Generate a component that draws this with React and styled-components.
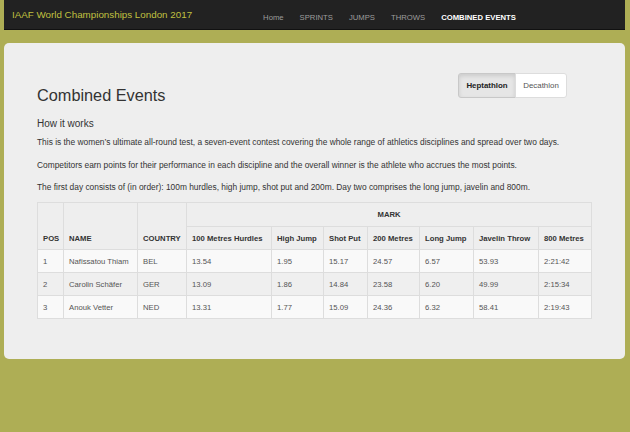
import React, { useState } from "react";
import styled, { createGlobalStyle, css } from "styled-components";

const GlobalStyle = createGlobalStyle`
    html, body {
        margin: 0;
        padding: 0;
        background: #aeae55;
        font-family: "Liberation Sans", Arial, sans-serif;
        color: #333;
    }
    * {
        box-sizing: border-box;
    }
`;

const Page = styled.div`
    padding: 0 5px 0 4px;
    min-height: 432px;
`;

const Navbar = styled.nav`
    display: flex;
    align-items: center;
    height: 30px;
    padding: 0 8px;
    background: #222;
    border-bottom: 1px solid #111;
`;

const Brand = styled.a`
    font-size: 9.8px;
    color: #c0c040;
    text-decoration: none;
    white-space: nowrap;
`;

const NavList = styled.ul`
    display: flex;
    gap: 16px;
    margin: 0 0 0 71px;
    padding: 0;
    list-style: none;
`;

const NavLink = styled.a`
    font-size: 7.7px;
    color: #9d9d9d;
    text-decoration: none;
    white-space: nowrap;
    ${({ $active }) =>
        $active &&
        css`
            color: #fff;
            font-weight: bold;
        `}
`;

const Panel = styled.main`
    margin-top: 13px;
    height: 316px;
    padding: 30px 34px 0 33px;
    background: #eee;
    border-radius: 5px;
`;

const TopRow = styled.div`
    display: flex;
    justify-content: space-between;
    align-items: flex-start;
`;

const Title = styled.h2`
    margin: 13px 0 0;
    font-size: 16.3px;
    line-height: 18px;
    font-weight: normal;
    color: #333;
`;

const ButtonGroup = styled.div`
    display: flex;
    margin-right: 24px;
`;

const ToggleButton = styled.button`
    width: 52px;
    height: 25px;
    padding: 0;
    font-family: inherit;
    font-size: 7.9px;
    color: #555;
    background: #fff;
    border: 1px solid #ddd;
    cursor: pointer;
    &:first-child {
        border-radius: 3px 0 0 3px;
    }
    &:last-child {
        border-radius: 0 3px 3px 0;
        margin-left: -1px;
    }
    ${({ $active }) =>
        $active &&
        css`
            width: 58px;
            color: #222;
            font-weight: bold;
            background: #e6e6e6;
            border-color: #c8c8c8;
            box-shadow: inset 0 2px 4px rgba(0, 0, 0, 0.12);
        `}
`;

const SubTitle = styled.h4`
    margin: 14px 0 8px;
    font-size: 10px;
    line-height: 11px;
    font-weight: normal;
    color: #333;
`;

const Intro = styled.div`
    display: flex;
    flex-direction: column;
    gap: 11.5px;
    margin-bottom: 9px;
`;

const Text = styled.p`
    margin: 0;
    font-size: 8.4px;
    line-height: 11px;
    color: #333;
`;

const Table = styled.table`
    width: 554px;
    table-layout: fixed;
    border-collapse: collapse;
    font-size: 7.7px;
`;

const HeadCell = styled.th`
    height: ${({ $tall }) => ($tall ? "24px" : "23px")};
    padding: 0 5px;
    text-align: ${({ $center }) => ($center ? "center" : "left")};
    vertical-align: middle;
    font-weight: bold;
    color: #333;
    border: 1px solid #ddd;
    white-space: nowrap;
    ${({ $bottom }) =>
        $bottom &&
        css`
            vertical-align: bottom;
            padding-bottom: 6px;
        `}
`;

const Row = styled.tr`
    background: ${({ $odd }) => ($odd ? "#f9f9f9" : "#efefef")};
`;

const Cell = styled.td`
    height: 23px;
    padding: 0 5px;
    color: #555;
    border: 1px solid #ddd;
    white-space: nowrap;
`;

const columns = [26, 74, 49, 85, 52, 44, 52, 54, 65, 53];

const events = [
    "100 Metres Hurdles",
    "High Jump",
    "Shot Put",
    "200 Metres",
    "Long Jump",
    "Javelin Throw",
    "800 Metres",
];

const athletes = [
    { pos: 1, name: "Nafissatou Thiam", country: "BEL", marks: ["13.54", "1.95", "15.17", "24.57", "6.57", "53.93", "2:21:42"] },
    { pos: 2, name: "Carolin Schäfer", country: "GER", marks: ["13.09", "1.86", "14.84", "23.58", "6.20", "49.99", "2:15:34"] },
    { pos: 3, name: "Anouk Vetter", country: "NED", marks: ["13.31", "1.77", "15.09", "24.36", "6.32", "58.41", "2:19:43"] },
];

const App = () => {
    const [event, setEvent] = useState("Heptathlon");

    return (
        <>
            <GlobalStyle />
            <Page>
                <Navbar>
                    <Brand href="#">IAAF World Championships London 2017</Brand>
                    <NavList>
                        {["Home", "SPRINTS", "JUMPS", "THROWS", "COMBINED EVENTS"].map((l) => (
                            <li key={l}>
                                <NavLink href="#" $active={l === "COMBINED EVENTS"}>
                                    {l}
                                </NavLink>
                            </li>
                        ))}
                    </NavList>
                </Navbar>
                <Panel>
                    <TopRow>
                        <Title>Combined Events</Title>
                        <ButtonGroup>
                            {["Heptathlon", "Decathlon"].map((e) => (
                                <ToggleButton key={e} $active={event === e} onClick={() => setEvent(e)}>
                                    {e}
                                </ToggleButton>
                            ))}
                        </ButtonGroup>
                    </TopRow>
                    <SubTitle>How it works</SubTitle>
                    <Intro>
                        <Text>
                            This is the women’s ultimate all-round test, a seven-event contest covering the whole
                            range of athletics disciplines and spread over two days.
                        </Text>
                        <Text>
                            Competitors earn points for their performance in each discipline and the overall
                            winner is the athlete who accrues the most points.
                        </Text>
                        <Text>
                            The first day consists of (in order): 100m hurdles, high jump, shot put and 200m. Day
                            two comprises the long jump, javelin and 800m.
                        </Text>
                    </Intro>
                    <Table>
                        <colgroup>
                            {columns.map((w, i) => (
                                <col key={i} style={{ width: w }} />
                            ))}
                        </colgroup>
                        <thead>
                            <tr>
                                <HeadCell rowSpan={2} $bottom>POS</HeadCell>
                                <HeadCell rowSpan={2} $bottom>NAME</HeadCell>
                                <HeadCell rowSpan={2} $bottom>COUNTRY</HeadCell>
                                <HeadCell colSpan={7} $center $tall>MARK</HeadCell>
                            </tr>
                            <tr>
                                {events.map((e) => (
                                    <HeadCell key={e}>{e}</HeadCell>
                                ))}
                            </tr>
                        </thead>
                        <tbody>
                            {athletes.map((a, i) => (
                                <Row key={a.pos} $odd={i % 2 === 0}>
                                    <Cell>{a.pos}</Cell>
                                    <Cell>{a.name}</Cell>
                                    <Cell>{a.country}</Cell>
                                    {a.marks.map((m, j) => (
                                        <Cell key={j}>{m}</Cell>
                                    ))}
                                </Row>
                            ))}
                        </tbody>
                    </Table>
                </Panel>
            </Page>
        </>
    );
};

export default App;
